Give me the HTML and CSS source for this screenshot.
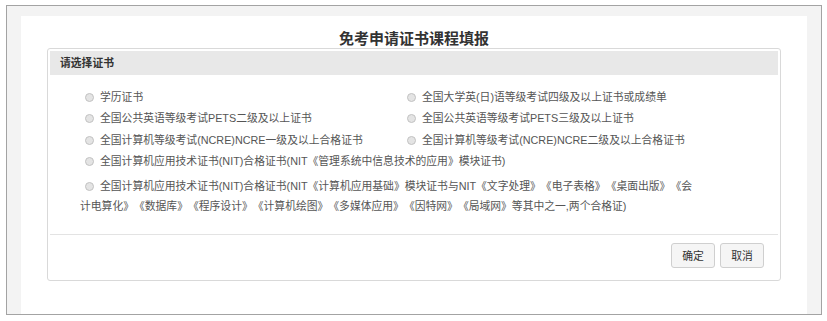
FILE: index.html
```html
<!DOCTYPE html>
<html lang="zh-CN">
<head>
<meta charset="utf-8">
<title>免考申请证书课程填报</title>
<link rel="stylesheet" href="styles.css">
</head>
<body>
<div class="frame">
  <div class="sheet">
    <h1 class="title">免考申请证书课程填报</h1>
    <div class="panel">
      <div class="panel-head">请选择证书</div>
      <div class="panel-body">
        <div class="grid">
          <label class="opt"><span class="radio"></span>学历证书</label>
          <label class="opt"><span class="radio"></span>全国大学英(日)语等级考试四级及以上证书或成绩单</label>
          <label class="opt"><span class="radio"></span>全国公共英语等级考试PETS二级及以上证书</label>
          <label class="opt"><span class="radio"></span>全国公共英语等级考试PETS三级及以上证书</label>
          <label class="opt"><span class="radio"></span>全国计算机等级考试(NCRE)NCRE一级及以上合格证书</label>
          <label class="opt"><span class="radio"></span>全国计算机等级考试(NCRE)NCRE二级及以上合格证书</label>
        </div>
        <label class="opt wide"><span class="radio"></span>全国计算机应用技术证书(NIT)合格证书(NIT《管理系统中信息技术的应用》模块证书)</label>
        <label class="opt wide long"><span class="radio"></span>全国计算机应用技术证书(NIT)合格证书(NIT《计算机应用基础》模块证书与NIT《文字处理》《电子表格》《桌面出版》《会计电算化》《数据库》《程序设计》《计算机绘图》《多媒体应用》《因特网》《局域网》等其中之一,两个合格证)</label>
      </div>
      <div class="panel-foot">
        <button class="btn" type="button">确定</button>
        <button class="btn" type="button">取消</button>
      </div>
    </div>
  </div>
</div>
</body>
</html>
```
FILE: styles.css
```css
* { box-sizing: border-box; }
html, body { margin: 0; padding: 0; background: #fff; }
body {
  font-family: "Liberation Sans", "Noto Sans CJK SC", sans-serif;
  font-size: 10.8px;
  color: #555;
  text-spacing-trim: space-all;
}
.frame {
  margin: 5px 0 0 6px;
  width: 816px;
  height: 310px;
  border: 1px solid #a3a3a3;
  background: #f3f3f3;
  padding: 10px 14px 0 14px;
}
.sheet {
  background: #fff;
  height: 100%;
  padding: 14px 26px 0 26px;
}
.title {
  margin: 0;
  font-size: 15px;
  line-height: 18px;
  font-weight: bold;
  color: #333;
  text-align: center;
}
.panel {
  border: 1px solid #d9d9d9;
  border-radius: 3px;
  padding: 2px;
}
.panel-head {
  height: 24px;
  line-height: 24px;
  background: #e8e8e8;
  padding-left: 10px;
  font-weight: bold;
  color: #333;
}
.panel-body {
  padding: 12px 81px 18px 30px;
}
.grid {
  display: grid;
  grid-template-columns: 322px 1fr;
}
.opt {
  display: block;
  line-height: 21.4px;
  white-space: nowrap;
}
.opt.wide { white-space: normal; }
.opt.long { margin-top: 3px; line-height: 20px; }
.radio {
  display: inline-block;
  width: 9px;
  height: 9px;
  border-radius: 50%;
  border: 1px solid #c2c2c2;
  background: #e4e4e4;
  margin: 0 6px 0 5px;
  vertical-align: -1px;
}
.panel-foot {
  border-top: 1px solid #e3e3e3;
  padding: 8px 14px 10px 0;
  display: flex;
  justify-content: flex-end;
  gap: 5px;
}
.btn {
  font-family: inherit;
  font-size: 10.8px;
  color: #333;
  height: 25px;
  width: 44px;
  padding: 0;
  background: #f5f5f5;
  border: 1px solid #cfcfcf;
  border-radius: 3px;
}
```
